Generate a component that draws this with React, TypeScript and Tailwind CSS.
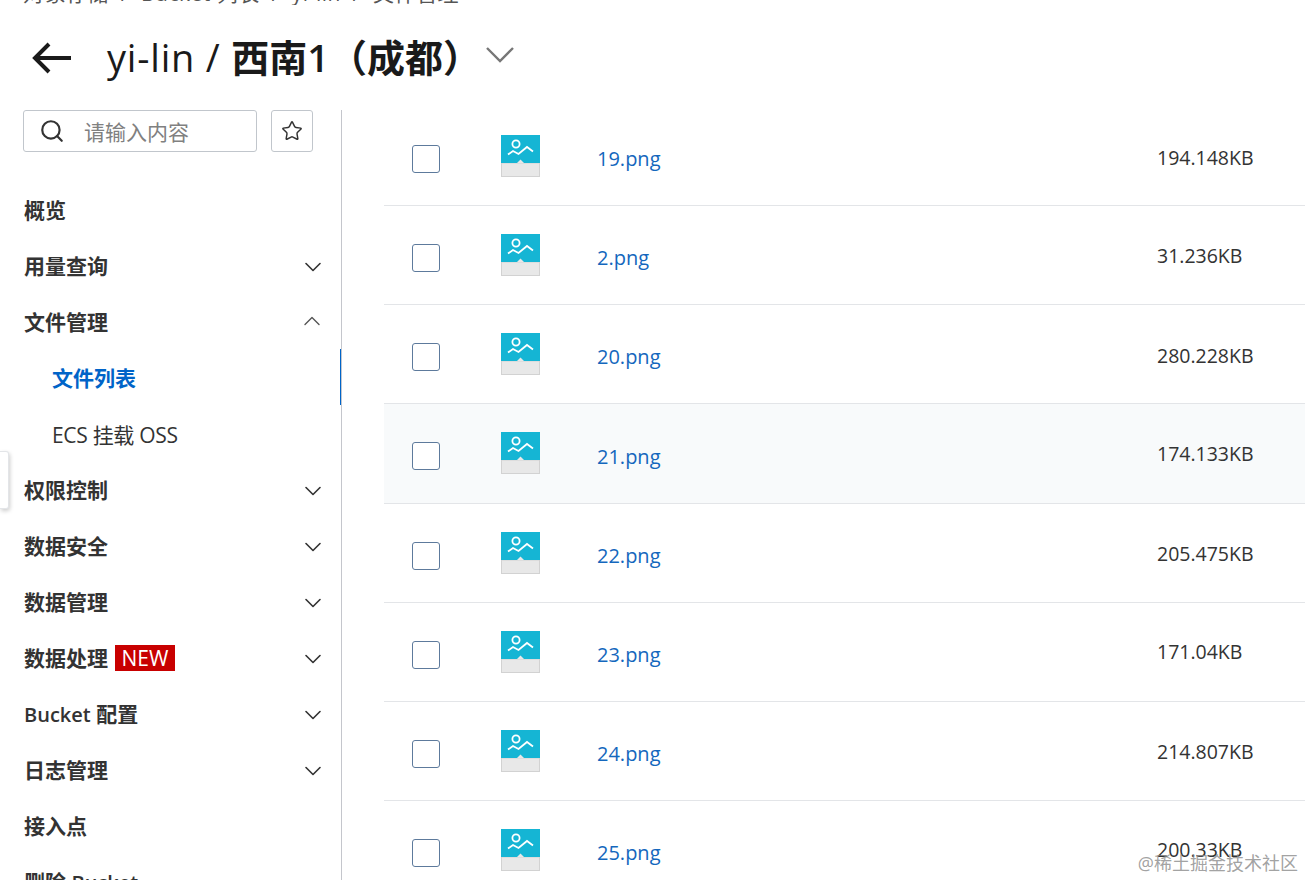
import { ChevronDown, ChevronUp, Search, Star } from 'lucide-react';

type NavItem = {
  label: string;
  before?: string;
  after?: string;
  arrow?: 'up' | 'down';
  sub?: boolean;
  active?: boolean;
  badge?: string;
};

const navItems: NavItem[] = [
  { label: '概览' },
  { label: '用量查询', arrow: 'down' },
  { label: '文件管理', arrow: 'up' },
  { label: '文件列表', sub: true, active: true },
  { label: 'ECS 挂载 OSS', sub: true },
  { label: '权限控制', arrow: 'down' },
  { label: '数据安全', arrow: 'down' },
  { label: '数据管理', arrow: 'down' },
  { label: '数据处理', arrow: 'down', badge: 'NEW' },
  { label: ' 配置', before: 'Bucket', arrow: 'down' },
  { label: '日志管理', arrow: 'down' },
  { label: '接入点' },
  { label: '删除 ', after: 'Bucket' },
];

const files = [
  { name: '19.png', size: '194.148KB', nameNudge: 'translate-y-[3px]', sizeNudge: 'translate-y-[2px]' },
  { name: '2.png', size: '31.236KB', nameNudge: 'translate-y-[3px]', sizeNudge: 'translate-y-0' },
  { name: '20.png', size: '280.228KB', nameNudge: 'translate-y-[3px]', sizeNudge: 'translate-y-[1px]' },
  { name: '21.png', size: '174.133KB', nameNudge: 'translate-y-[4px]', sizeNudge: 'translate-y-0' },
  { name: '22.png', size: '205.475KB', nameNudge: 'translate-y-[3px]', sizeNudge: 'translate-y-[1px]' },
  { name: '23.png', size: '171.04KB', nameNudge: 'translate-y-[3px]', sizeNudge: 'translate-y-0' },
  { name: '24.png', size: '214.807KB', nameNudge: 'translate-y-[3px]', sizeNudge: 'translate-y-[1px]' },
  { name: '25.png', size: '200.33KB', nameNudge: 'translate-y-[3px]', sizeNudge: 'translate-y-0' },
];

function ImageFileIcon() {
  return (
    <svg width="39" height="42" viewBox="0 0 39 42" className="block">
      <rect x="0" y="0" width="39" height="42" fill="#e8e8e8" />
      <rect x="0.5" y="28" width="38" height="13.5" fill="none" stroke="#d2d2d2" />
      <rect x="0" y="0" width="39" height="28" fill="#15b5d4" />
      <path d="M16 28 L19.5 24.5 L23 28 Z" fill="#e8e8e8" />
      <circle cx="15" cy="9" r="3.6" fill="none" stroke="#ffffff" strokeWidth="1.8" />
      <path d="M7 19.5 L12 16 L17.5 19 L26 12 L32 16.5" fill="none" stroke="#ffffff" strokeWidth="1.8" />
    </svg>
  );
}

function Sidebar() {
  return (
    <aside className="w-[342px] shrink-0 border-r border-[#c4c6cc] h-[770px] overflow-hidden">
      <div className="flex items-center gap-[14px] pl-[23px]">
        <div className="w-[234px] h-[42px] flex items-center border border-[#c1c6cc] rounded-[3px] pl-[15px]">
          <Search size={26} strokeWidth={2} className="text-[#333333]" />
          <span className="ml-[19px] text-[21px] leading-none text-[#808080] translate-y-[1px]">请输入内容</span>
        </div>
        <div className="w-[42px] h-[42px] flex items-center justify-center border border-[#c1c6cc] rounded-[3px]">
          <Star size={22} strokeWidth={1.6} className="text-[#333333]" />
        </div>
      </div>
      <nav className="mt-[30px]">
        {navItems.map((item) => (
          <div
            key={item.label}
            className={`relative h-[56px] flex items-center pr-[14px] ${item.sub ? 'pl-[52px]' : 'pl-[24px]'}`}
          >
            <span
              className={`text-[21px] leading-none whitespace-pre ${item.active ? 'font-bold text-[#0064c8]' : item.sub ? 'text-[#333333] tracking-[-0.3px] translate-y-[1px]' : 'font-bold text-[#333333]'}`}
            >
              {item.before && <span className="font-semibold text-[20px]">{item.before}</span>}
              {item.label}
              {item.after && <span className="font-semibold text-[20px]">{item.after}</span>}
            </span>
            {item.badge && (
              <span className="ml-[7px] h-[26px] w-[60px] flex items-center justify-center bg-[#c80000] text-white text-[21px] leading-none">
                {item.badge}
              </span>
            )}
            {item.arrow === 'down' && (
              <ChevronDown size={28} strokeWidth={1.4} className="ml-auto text-[#333333] translate-y-[1px]" />
            )}
            {item.arrow === 'up' && (
              <ChevronUp size={28} strokeWidth={1.2} className="ml-auto text-[#555555] translate-y-[-1px] -translate-x-px" />
            )}
            {item.active && <span className="absolute right-[-1px] top-[-1px] h-[56px] w-[2px] bg-[#0064c8]" />}
          </div>
        ))}
      </nav>
    </aside>
  );
}

type FileRowProps = {
  name: string;
  size: string;
  nameNudge: string;
  sizeNudge: string;
  hover: boolean;
};

function FileRow({ name, size, nameNudge, sizeNudge, hover }: FileRowProps) {
  return (
    <div className={`h-[99.15px] flex items-center border-b border-[#e3e5e8] ${hover ? 'bg-[#f8fafb]' : ''}`}>
      <div className="ml-[28px] w-[28px] h-[28px] border border-[#5d7a9c] rounded-[3px] bg-white translate-y-[3px]" />
      <div className="ml-[61px]">
        <ImageFileIcon />
      </div>
      <a className={`ml-[57px] w-[560px] text-[20px] text-[#1467bd] ${nameNudge}`}>{name}</a>
      <span className={`text-[19.5px] text-[#333333] ${sizeNudge}`}>{size}</span>
    </div>
  );
}

export default function App() {
  return (
    <div
      className="relative h-[880px] w-[1305px] overflow-hidden bg-white"
      style={{ fontFamily: '"Open Sans", "Noto Sans CJK SC", sans-serif' }}
    >
      <div className="h-[5px] overflow-hidden">
        <div className="-mt-[19px] pl-[23px] text-[21px] leading-[24px] tracking-[0.5px] text-[#555555] whitespace-pre">
          对象存储  /  Bucket 列表  /  yi-lin  /  文件管理
        </div>
      </div>

      <header className="h-[105px] flex items-center pl-[32px]">
        <svg width="40" height="34" viewBox="0 0 40 34" className="shrink-0">
          <path d="M39 17 H3 M17 3 L3 17 L17 31" fill="none" stroke="#1a1a1a" strokeWidth="4" />
        </svg>
        <h1 className="ml-[35px] text-[38px] leading-none text-[#1a1a1a] whitespace-nowrap -translate-y-[1px]">
          <span className="font-medium tracking-[0.8px]">yi-lin / </span>
          <span className="font-bold">西南</span>
          <span className="font-semibold">1</span>
          <span className="font-bold">（成都）</span>
        </h1>
        <svg width="28" height="16" viewBox="0 0 28 16" className="ml-[5px] shrink-0 -translate-y-[3px]">
          <path d="M1 1 L14 14 L27 1" fill="none" stroke="#777777" strokeWidth="2.4" />
        </svg>
      </header>

      <div className="flex">
        <Sidebar />
        <main className="flex-1 ml-[42px] -mt-[3px]">
          {files.map((file, i) => (
            <FileRow key={file.name} {...file} hover={i === 3} />
          ))}
        </main>
      </div>

      <div className="absolute left-0 top-[451px] h-[58px] w-[9px] bg-white rounded-r-[3px] border border-l-0 border-[#e3e5e8] shadow-[1px_2px_4px_rgba(0,0,0,0.2)]" />
      <div className="absolute right-[7px] top-[851px] text-[18px] leading-[24px] text-[#8a8a8a]/80">@稀土掘金技术社区</div>
    </div>
  );
}
